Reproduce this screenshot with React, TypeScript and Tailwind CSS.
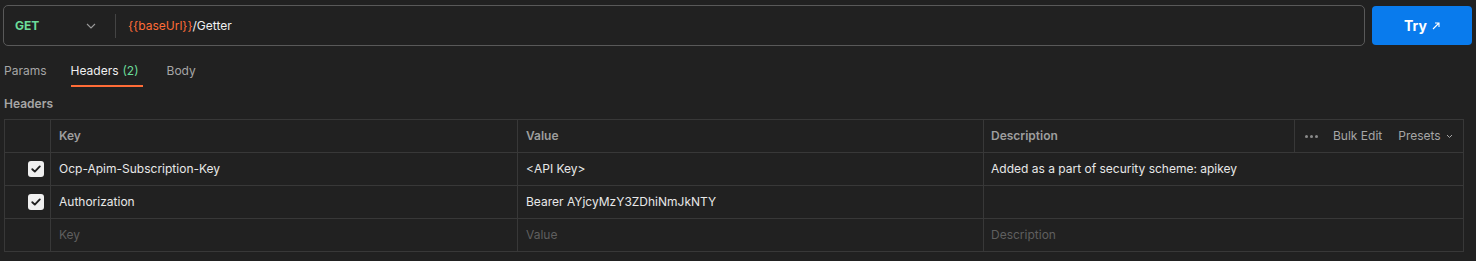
import React from "react";

const font = { fontFamily: "Inter, 'Noto Sans', 'Liberation Sans', sans-serif" };

function Check() {
  return (
    <div className="w-[16px] h-[16px] rounded-[3px] bg-[#f0f0f0] flex items-center justify-center">
      <svg width="12" height="12" viewBox="0 0 12 12" fill="none">
        <path d="M2.3 6.2 L4.8 8.6 L9.8 3.4" stroke="#1f1f1f" strokeWidth="1.9" strokeLinecap="round" strokeLinejoin="round" />
      </svg>
    </div>
  );
}

function Row({ checked, k, v, d, placeholder }: { checked?: boolean; k: string; v: string; d: string; placeholder?: boolean }) {
  const txt = placeholder ? "text-[#5f5f5f]" : "text-[#e8e8e8]";
  return (
    <div className="grid grid-cols-[45px_467px_466px_1fr] h-[33px] border-t border-[#383838]">
      <div className="flex items-center justify-end pr-[6px]">{checked ? <Check /> : null}</div>
      <div className={`border-l border-[#383838] flex items-center pl-[8px] ${txt}`}>{k}</div>
      <div className={`border-l border-[#383838] flex items-center pl-[8px] ${txt}`}>{v}</div>
      <div className={`border-l border-[#383838] flex items-center pl-[7px] ${txt}`}>{d}</div>
    </div>
  );
}

export default function App() {
  return (
    <div className="w-[1476px] h-[261px] bg-[#212121] text-[12px] overflow-hidden" style={font}>
      <div className="flex items-center pt-[5px] pl-[3px]">
        <div className="w-[1362px] h-[41px] rounded-[5px] border border-[#595959] flex items-center">
          <div className="w-[111px] flex items-center pl-[11px]">
            <span className="font-bold text-[#6bdd9a] text-[12px]">GET</span>
            <svg className="ml-[47px]" width="10" height="6" viewBox="0 0 10 6" fill="none">
              <path d="M1 1 L5 5 L9 1" stroke="#9a9a9a" strokeWidth="1.1" />
            </svg>
          </div>
          <div className="w-px h-[24px] bg-[#444444]" />
          <div className="pl-[12px] text-[12px]">
            <span className="text-[#ff6c37]">{"{{baseUrl}}"}</span>
            <span className="text-[#f0f0f0]">/Getter</span>
          </div>
        </div>
        <div className="ml-[7px] w-[100px] h-[39px] rounded-[4px] bg-[#097bed] flex items-center justify-center text-white">
          <span className="font-bold text-[14px]">Try</span>
          <svg className="ml-[5px] mt-[1px]" width="8" height="8" viewBox="0 0 8 8" fill="none">
            <path d="M1 7 L7 1 M3 1 H7 V5" stroke="white" strokeWidth="1.1" />
          </svg>
        </div>
      </div>

      <div className="flex mt-[10px] pl-[4px]">
        <div className="h-[31px] flex items-center pb-[2px] text-[#a6a6a6]">Params</div>
        <div className="ml-[24px] h-[31px] flex items-center border-b-2 border-[#ff6c37] text-[#f0f0f0]">
          <span>Headers</span>
          <span className="ml-[4px] text-[#6bdd9a]">(2)</span>
          <span className="w-[4px]" />
        </div>
        <div className="ml-[24px] h-[31px] flex items-center pb-[2px] text-[#a6a6a6]">Body</div>
      </div>

      <div className="h-[32px] flex items-center pl-[4px] pt-[1px] font-semibold text-[#a6a6a6]">Headers</div>

      <div className="ml-[4px] w-[1460px] border-l border-r border-b border-[#383838]">
        <div className="grid grid-cols-[45px_467px_466px_1fr] h-[33px] border-t border-[#383838] font-semibold text-[#9e9e9e]">
          <div />
          <div className="border-l border-[#383838] flex items-center pl-[8px]">Key</div>
          <div className="border-l border-[#383838] flex items-center pl-[8px]">Value</div>
          <div className="border-l border-[#383838] flex items-center">
            <div className="flex-1 pl-[7px]">Description</div>
            <div className="w-[169px] h-full border-l border-[#383838] flex items-center font-normal text-[#a6a6a6]">
              <span className="ml-[10px] flex gap-[2px]">
                <span className="w-[3px] h-[3px] rounded-full bg-[#8a8a8a]" />
                <span className="w-[3px] h-[3px] rounded-full bg-[#8a8a8a]" />
                <span className="w-[3px] h-[3px] rounded-full bg-[#8a8a8a]" />
              </span>
              <span className="ml-[15px]">Bulk Edit</span>
              <span className="ml-[16px]">Presets</span>
              <svg className="ml-[5px]" width="7" height="5" viewBox="0 0 7 5" fill="none">
                <path d="M1 1 L3.5 3.5 L6 1" stroke="#a6a6a6" strokeWidth="1" />
              </svg>
            </div>
          </div>
        </div>
        <Row checked k="Ocp-Apim-Subscription-Key" v="<API Key>" d="Added as a part of security scheme: apikey" />
        <Row checked k="Authorization" v="Bearer AYjcyMzY3ZDhiNmJkNTY" d="" />
        <Row placeholder k="Key" v="Value" d="Description" />
      </div>
    </div>
  );
}
